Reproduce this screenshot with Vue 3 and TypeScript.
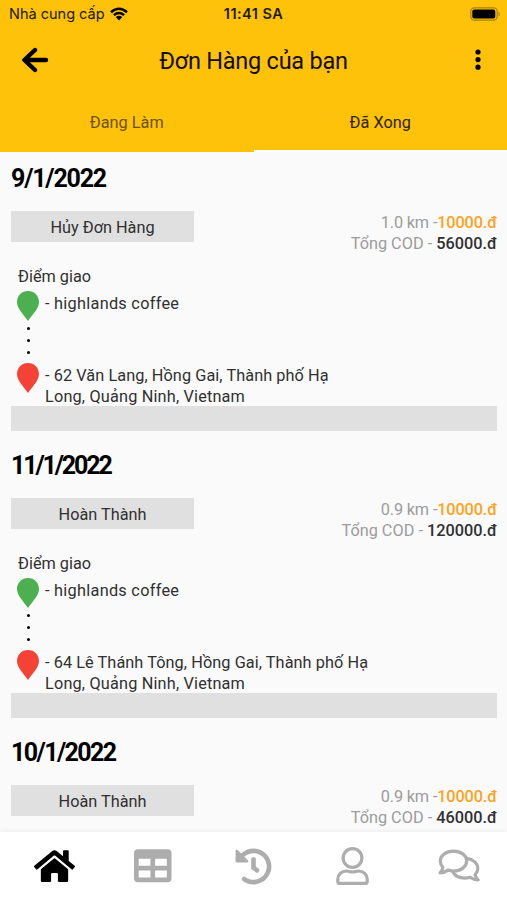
<script setup lang="ts">
interface Order {
  date: string
  dateClass: string
  status: string
  distance: string
  total: string
  lines: string[]
}

const orders: Order[] = [
  {
    date: '9/1/2022',
    dateClass: 'wide',
    status: 'Hủy Đơn Hàng',
    distance: '1.0',
    total: '56000.đ',
    lines: ['- 62 Văn Lang, Hồng Gai, Thành phố Hạ', 'Long, Quảng Ninh, Vietnam'],
  },
  {
    date: '11/1/2022',
    dateClass: 'tight',
    status: 'Hoàn Thành',
    distance: '0.9',
    total: '120000.đ',
    lines: ['- 64 Lê Thánh Tông, Hồng Gai, Thành phố Hạ', 'Long, Quảng Ninh, Vietnam'],
  },
  {
    date: '10/1/2022',
    dateClass: 'medium',
    status: 'Hoàn Thành',
    distance: '0.9',
    total: '46000.đ',
    lines: [],
  },
]
</script>

<template>
  <div class="screen">
    <header class="top">
      <div class="status">
        <div class="carrier">
          <span>Nhà cung cấp</span>
          <svg class="wifi" viewBox="0 0 18 14">
            <path d="M1 5.2Q9-1.6 17 5.2" />
            <path d="M3.9 8.1Q9 3.9 14.1 8.1" />
            <path class="solid" d="M5.8 10Q9 7.4 12.2 10L9 13.4z" />
          </svg>
        </div>
        <span class="clock">11:41 SA</span>
        <div class="power">
          <svg viewBox="0 0 31 14">
            <rect class="shell" x=".8" y=".8" width="26.4" height="12.4" rx="3.6" />
            <rect x="2.3" y="2.4" width="23" height="9.2" rx="2" />
            <path class="cap" d="M28.5 4.6q2.6 2.4 0 4.8z" />
          </svg>
        </div>
      </div>
      <div class="bar">
        <svg class="back" viewBox="0 0 28 26">
          <path d="M14 3 3.4 13 14 23M4 13h21" />
        </svg>
        <h1>Đơn Hàng của bạn</h1>
        <svg class="more" viewBox="0 0 6 22">
          <circle cx="3" cy="3" r="2.6" />
          <circle cx="3" cy="10.6" r="2.6" />
          <circle cx="3" cy="18.2" r="2.6" />
        </svg>
      </div>
      <nav class="tabs">
        <span class="tab">Đang Làm</span>
        <span class="tab active">Đã Xong</span>
      </nav>
    </header>

    <main class="list">
      <section v-for="order in orders" :key="order.date" class="order">
        <h2 :class="order.dateClass">{{ order.date }}</h2>
        <div class="summary">
          <span class="badge">{{ order.status }}</span>
          <div class="price">
            <div class="fee">{{ order.distance }} km -<b>10000.đ</b></div>
            <div class="cod">Tổng COD - <b>{{ order.total }}</b></div>
          </div>
        </div>
        <template v-if="order.lines.length">
          <div class="label">Điểm giao</div>
          <div class="stop">
            <svg class="pin from" viewBox="0 0 22 30">
              <path d="M11 0C4.600 0 0 4.800 0 11c0 6.400 6.500 12.600 11 19 4.500-6.400 11-12.600 11-19C22 4.800 17.400 0 11 0z" />
            </svg>
            <span class="place">- highlands coffee</span>
          </div>
          <div class="dots"><i></i><i></i><i></i></div>
          <div class="stop">
            <svg class="pin to" viewBox="0 0 22 30">
              <path d="M11 0C4.600 0 0 4.800 0 11c0 6.400 6.500 12.600 11 19 4.500-6.400 11-12.600 11-19C22 4.800 17.400 0 11 0z" />
            </svg>
            <div class="address">
              <div v-for="line in order.lines" :key="line">{{ line }}</div>
            </div>
          </div>
          <div class="strip"></div>
        </template>
      </section>
    </main>

    <footer class="bottom">
      <div class="item current">
        <svg width="41" height="36.400" viewBox="0 0 576 512">
          <path d="M280.370 148.260L96 300.110V464a16 16 0 0 0 16 16l112.060-.290a16 16 0 0 0 15.920-16V368a16 16 0 0 1 16-16h64a16 16 0 0 1 16 16v95.640a16 16 0 0 0 16 16.050L464 480a16 16 0 0 0 16-16V300L295.670 148.260a12.190 12.190 0 0 0-15.300 0zM571.600 251.470L488 182.560V44.050a12 12 0 0 0-12-12h-56a12 12 0 0 0-12 12v72.610L318.470 43a48 48 0 0 0-61 0L4.340 251.470a12 12 0 0 0-1.600 16.900l25.500 31A12 12 0 0 0 45.150 301l235.220-193.740a12.190 12.190 0 0 1 15.300 0L530.900 301a12 12 0 0 0 16.900-1.600l25.500-31a12 12 0 0 0-1.700-16.930z" />
        </svg>
      </div>
      <div class="item orders">
        <svg width="37.500" height="37.500" viewBox="0 0 512 512">
          <path d="M464 32H48C21.490 32 0 53.490 0 80v352c0 26.510 21.490 48 48 48h416c26.510 0 48-21.490 48-48V80c0-26.510-21.490-48-48-48zM224 416H64v-96h160v96zm0-160H64v-96h160v96zm224 160H288v-96h160v96zm0-160H288v-96h160v96z" />
        </svg>
      </div>
      <div class="item history">
        <svg width="37" height="37" viewBox="0 0 512 512">
          <path d="M504 255.531c.253 136.640-111.180 248.372-247.820 248.468-59.015.042-113.223-20.530-155.822-54.911-11.077-8.940-11.905-25.541-1.839-35.607l11.267-11.267c8.609-8.609 22.353-9.551 31.891-1.984C173.062 425.135 212.781 440 256 440c101.705 0 184-82.311 184-184 0-101.705-82.311-184-184-184-48.814 0-93.149 18.969-126.068 49.932l50.754 50.754c10.080 10.080 2.941 27.314-11.313 27.314H24c-8.837 0-16-7.163-16-16V38.627c0-14.254 17.234-21.393 27.314-11.314l49.372 49.372C129.209 34.136 189.552 8 256 8c136.810 0 247.747 110.780 248 247.531zm-180.912 78.784l9.823-12.630c8.138-10.463 6.253-25.542-4.210-33.679L288 256.349V152c0-13.255-10.745-24-24-24h-16c-13.255 0-24 10.745-24 24v135.651l65.409 50.874c10.463 8.137 25.541 6.253 33.679-4.210z" />
        </svg>
      </div>
      <div class="item account">
        <svg class="line" width="33" height="38" viewBox="0 0 33 38">
          <circle cx="16.500" cy="11" r="9.400" />
          <path d="M10.500 24c2.500 0 3 1 6 1s3.500-1 6-1c5 0 8.700 3.600 8.700 8v2.400q0 2-2 2H3.800q-2 0-2-2V32c0-4.400 3.700-8 8.700-8z" />
        </svg>
      </div>
      <div class="item chat">
        <svg class="line" width="42" height="34" viewBox="0 0 42 34">
          <path d="M15.500 2.200c7.400 0 13.200 4.400 13.200 9.900S22.900 22 15.500 22c-2 0-3.900-.300-5.500-.900-2.300 1.700-5 2.600-8 2.700 1.600-1.700 2.500-3.500 2.900-5.300-1.600-1.800-2.600-4-2.600-6.400 0-5.500 5.800-9.900 13.200-9.900z" />
          <path d="M28.800 9.400c6.300.800 11 5 11 10 0 2.400-1 4.600-2.700 6.300.500 1.800 1.400 3.500 3 5.200-3-.100-5.700-1-8-2.700-1.700.600-3.500.900-5.500.900-5.300 0-9.900-2.500-12-6.600" />
        </svg>
      </div>
    </footer>
  </div>
</template>

<style>
body {
  margin: 0;
  background: #fafafa;
}
</style>

<style scoped>
.screen {
  box-sizing: border-box;
  width: 507px;
  height: 900px;
  display: flex;
  flex-direction: column;
  overflow: hidden;
  background: #fafafa;
  color: #303030;
  font: 16.3px/21px Roboto, "Noto Sans", sans-serif;
  white-space: nowrap;
}
.top {
  flex: none;
  height: 152px;
  display: flex;
  flex-direction: column;
  background: #ffc20a;
}
.status {
  height: 27px;
  display: grid;
  grid-template-columns: 1fr auto 1fr;
  align-items: center;
  padding: 0 6px 0 9px;
  color: #221a02;
  font-family: Inter, sans-serif;
  font-size: 14.500px;
}
.carrier {
  display: flex;
  align-items: center;
  gap: 5px;
}
.wifi {
  width: 18px;
  height: 14px;
  fill: none;
  stroke: #000;
  stroke-width: 2.500;
}
.wifi .solid {
  fill: #000;
  stroke: none;
}
.clock {
  font-weight: 600;
  letter-spacing: 0.450px;
  margin-right: 3px;
}
.power {
  display: flex;
  justify-content: flex-end;
}
.power svg {
  width: 31px;
  height: 14px;
}
.shell {
  fill: none;
  stroke: #a98108;
  stroke-width: 1.200;
}
.cap {
  fill: #a98108;
}
.bar {
  height: 66px;
  display: grid;
  grid-template-columns: 60px 1fr 60px;
  align-items: center;
}
.back {
  width: 28px;
  height: 26px;
  margin-left: 21px;
  fill: none;
  stroke: #000;
  stroke-width: 4.400;
  stroke-linecap: round;
  stroke-linejoin: round;
}
h1 {
  margin: 0;
  padding-top: 1px;
  text-align: center;
  color: #120d00;
  font-size: 23.500px;
  line-height: 30px;
  letter-spacing: -0.250px;
  font-weight: 400;
}
.more {
  width: 6px;
  height: 22px;
  margin-left: 28px;
}
.tabs {
  flex: 1;
  display: grid;
  grid-template-columns: 1fr 1fr;
}
.tab {
  display: flex;
  align-items: center;
  justify-content: center;
  padding-top: 2px;
  border-bottom: 2px solid transparent;
  color: #6b5208;
}
.tab.active {
  border-color: #fff;
  color: #2d2203;
}
.list {
  flex: 1;
  min-height: 0;
  overflow: hidden;
  padding: 0 10px 0 11px;
}
.order {
  height: 287px;
}
h2 {
  margin: 0;
  padding-top: 12px;
  color: #000;
  font-size: 25px;
  line-height: 30px;
  font-weight: 700;
}
.wide {
  letter-spacing: -1.200px;
}
.tight {
  letter-spacing: -2.150px;
}
.medium {
  letter-spacing: -1.600px;
}
.summary {
  display: flex;
  justify-content: space-between;
  padding-top: 17px;
}
.badge {
  width: 183px;
  height: 31px;
  line-height: 33px;
  background: #e0e0e0;
  text-align: center;
}
.price {
  padding-top: 1px;
  text-align: right;
  color: #9c9c9c;
}
.price b {
  font-weight: 500;
}
.fee {
  letter-spacing: -0.150px;
}
.fee b {
  color: #ffa21c;
}
.cod b {
  color: #303030;
}
.label {
  padding: 12px 0 0 7px;
}
.stop {
  display: flex;
  gap: 6px;
  padding-left: 6px;
}
.pin {
  flex: none;
  width: 22px;
  height: 30px;
  margin-top: 4px;
}
.from {
  fill: #4caf50;
}
.to {
  fill: #f44336;
}
.place,
.address {
  padding-top: 6px;
}
.place {
  letter-spacing: 0.280px;
}
.address {
  letter-spacing: 0.070px;
}
.address div + div {
  letter-spacing: 0.170px;
}
.dots {
  height: 38px;
  display: flex;
  flex-direction: column;
  align-items: center;
  gap: 9px;
  width: 34px;
  padding-top: 6px;
  box-sizing: border-box;
}
.dots i {
  width: 3px;
  height: 3px;
  border-radius: 50%;
  background: #000;
}
.strip {
  height: 25px;
  margin-top: -1px;
  background: #e0e0e0;
}
.bottom {
  flex: none;
  height: 68px;
  display: grid;
  grid-template-columns: repeat(5, 1fr);
  background: #fff;
  box-shadow: 0 -1px 5px rgba(0, 0, 0, 0.060);
  z-index: 1;
}
.item {
  display: flex;
  align-items: center;
  justify-content: center;
  fill: #adadad;
}
.current {
  padding-left: 7px;
  fill: #000;
}
.orders {
  padding-left: 2px;
}
.account {
  padding-right: 4px;
}
.chat {
  padding-left: 5px;
}
.line {
  fill: none;
  stroke: #adadad;
  stroke-width: 3.200;
  stroke-linejoin: round;
  stroke-linecap: round;
}
</style>
